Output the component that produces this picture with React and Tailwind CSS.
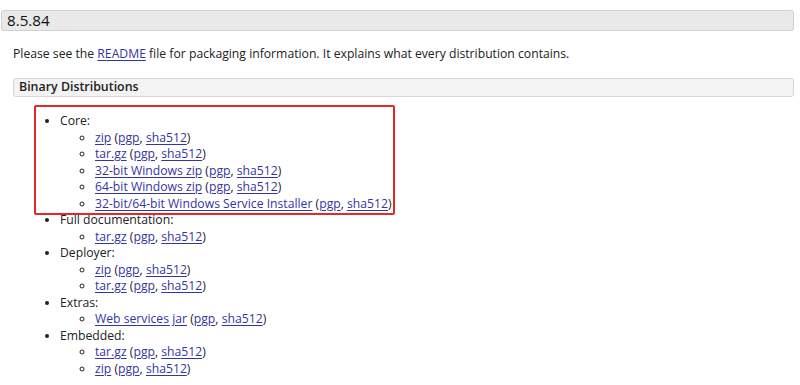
import React from 'react';

const core = [
  'zip',
  'tar.gz',
  '32-bit Windows zip',
  '64-bit Windows zip',
  '32-bit/64-bit Windows Service Installer',
];

const groups = [
  { title: 'Core:', items: core },
  { title: 'Full documentation:', items: ['tar.gz'] },
  { title: 'Deployer:', items: ['zip', 'tar.gz'] },
  { title: 'Extras:', items: ['Web services jar'] },
  { title: 'Embedded:', items: ['tar.gz', 'zip'] },
];

function Dl({ label }) {
  return (
    <li>
      <a href="#" className="text-[#3434a4] underline underline-offset-2">{label}</a>{' '}
      (<a href="#" className="text-[#3434a4] underline underline-offset-2">pgp</a>,{' '}
      <a href="#" className="text-[#3434a4] underline underline-offset-2">sha512</a>)
    </li>
  );
}

export default function App() {
  return (
    <div
      className="relative w-[800px] h-[385px] overflow-hidden bg-white pt-[10px] text-[#222] text-[12.2px] leading-[16.5px]"
      style={{ fontFamily: '"Open Sans", "Noto Sans", sans-serif' }}
    >
      <h2 className="ml-[1px] mr-[6px] h-[21px] px-[5px] flex items-center bg-[#e9e9e9] border border-[#d0d0d0] rounded-[3px] text-[15.2px] text-[#111]">
        8.5.84
      </h2>

      <p className="mt-[14px] ml-[13px] leading-[18px]">
        Please see the{' '}
        <a href="#" className="text-[#3434a4] underline underline-offset-2">README</a>{' '}
        file for packaging information. It explains what every distribution contains.
      </p>

      <h3 className="mt-[15px] ml-[13px] mr-[6px] h-[19px] px-[5px] flex items-center bg-[#f3f3f3] border border-[#d6d6d6] rounded-[3px] font-semibold text-[12.4px]">
        Binary Distributions
      </h3>

      <ul className="mt-[16px] pl-[60px] list-disc">
        {groups.map((g) => (
          <li key={g.title}>
            {g.title}
            <ul className="pl-[35px] list-[circle]">
              {g.items.map((it, i) => (
                <Dl key={i} label={it} />
              ))}
            </ul>
          </li>
        ))}
      </ul>

      <div className="absolute left-[34px] top-[105px] w-[361px] h-[110px] border-2 border-[#e3282b] rounded-[2px]" />
    </div>
  );
}
